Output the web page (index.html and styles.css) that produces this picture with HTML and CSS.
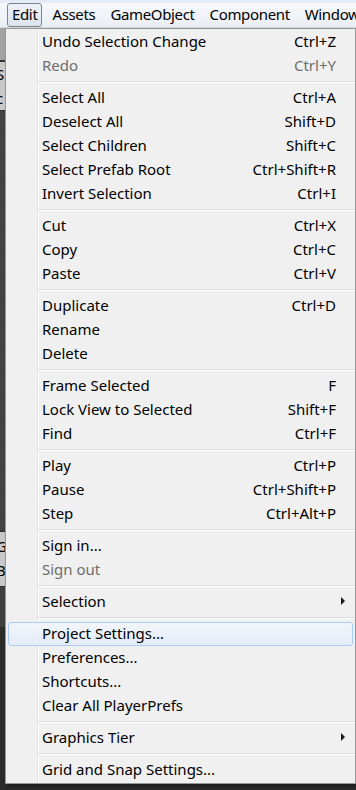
FILE: index.html
```html
<!DOCTYPE html>
<html lang="en-us">
<head>
  <meta charset="UTF-8">
  <title>Edit Menu</title>
  <link rel="stylesheet" href="styles.css">
</head>
<body>
  <div class="menubar">
    <span class="top active">Edit</span>
    <span class="top">Assets</span>
    <span class="top">GameObject</span>
    <span class="top">Component</span>
    <span class="top">Window</span>
  </div>

  <!-- editor panels peeking out behind the popup -->
  <div class="backdrop">
    <div class="strip toolbar"></div>
    <div class="strip panel"><span>S</span><span>c</span></div>
    <div class="strip dark tall"></div>
    <div class="strip panel low"><span>G</span><span>B.</span></div>
    <div class="strip dark"></div>
  </div>

  <div class="popup">
    <div class="item"><span class="label">Undo Selection Change</span><span class="key">Ctrl+Z</span></div>
    <div class="item disabled"><span class="label">Redo</span><span class="key">Ctrl+Y</span></div>
    <div class="sep"></div>
    <div class="item"><span class="label">Select All</span><span class="key">Ctrl+A</span></div>
    <div class="item"><span class="label">Deselect All</span><span class="key">Shift+D</span></div>
    <div class="item"><span class="label">Select Children</span><span class="key">Shift+C</span></div>
    <div class="item"><span class="label">Select Prefab Root</span><span class="key">Ctrl+Shift+R</span></div>
    <div class="item"><span class="label">Invert Selection</span><span class="key">Ctrl+I</span></div>
    <div class="sep"></div>
    <div class="item"><span class="label">Cut</span><span class="key">Ctrl+X</span></div>
    <div class="item"><span class="label">Copy</span><span class="key">Ctrl+C</span></div>
    <div class="item"><span class="label">Paste</span><span class="key">Ctrl+V</span></div>
    <div class="sep"></div>
    <div class="item"><span class="label">Duplicate</span><span class="key">Ctrl+D</span></div>
    <div class="item"><span class="label">Rename</span></div>
    <div class="item"><span class="label">Delete</span></div>
    <div class="sep"></div>
    <div class="item"><span class="label">Frame Selected</span><span class="key">F</span></div>
    <div class="item"><span class="label">Lock View to Selected</span><span class="key">Shift+F</span></div>
    <div class="item"><span class="label">Find</span><span class="key">Ctrl+F</span></div>
    <div class="sep"></div>
    <div class="item"><span class="label">Play</span><span class="key">Ctrl+P</span></div>
    <div class="item"><span class="label">Pause</span><span class="key">Ctrl+Shift+P</span></div>
    <div class="item"><span class="label">Step</span><span class="key">Ctrl+Alt+P</span></div>
    <div class="sep"></div>
    <div class="item"><span class="label">Sign in...</span></div>
    <div class="item disabled"><span class="label">Sign out</span></div>
    <div class="sep"></div>
    <div class="item"><span class="label">Selection</span><span class="arrow"></span></div>
    <div class="sep"></div>
    <div class="item hover"><span class="label">Project Settings...</span></div>
    <div class="item"><span class="label">Preferences...</span></div>
    <div class="item"><span class="label">Shortcuts...</span></div>
    <div class="item"><span class="label">Clear All PlayerPrefs</span></div>
    <div class="sep"></div>
    <div class="item"><span class="label">Graphics Tier</span><span class="arrow"></span></div>
    <div class="sep"></div>
    <div class="item"><span class="label">Grid and Snap Settings...</span></div>
  </div>
</body>
</html>
```

FILE: styles.css
```css
body {
  margin: 0;
  width: 356px;
  height: 790px;
  overflow: hidden;
  position: relative;
  background: #2b2b2b;
  font-family: "Noto Sans", "Open Sans", sans-serif;
  font-size: 15px;
  color: #000;
}
.menubar {
  display: flex;
  align-items: center;
  height: 28px;
  box-sizing: border-box;
  padding: 3px 0 0 7px;
  background: linear-gradient(#e3ecf7 0, #e3ecf7 3px, #f6f8fb 3px, #eaeef4 100%);
  border-bottom: 1px solid #d5dbe3;
  overflow: hidden;
}
.top {
  padding: 0 4px 0 4px;
  height: 22px;
  line-height: 20px;
  margin-right: 5px;
  border: 1px solid transparent;
  border-radius: 3px;
  white-space: nowrap;
  letter-spacing: -0.35px;
}
.top.active {
  border-color: #7f848c;
  background: linear-gradient(#eef3f9, #dbe3ee);
}
.backdrop {
  width: 5px;
  display: flex;
  flex-direction: column;
}
.strip {
  background: #3e3e3e;
  height: 40px;
  border-bottom: 1px solid #2d2d2d;
}
.strip.toolbar {
  height: 32px;
  background: #a3a3a3;
  border-bottom: 2px solid #333;
}
.strip.panel {
  height: 48px;
  background: #c8c8c8;
  display: flex;
  flex-direction: column;
  line-height: 24px;
  text-indent: -4px;
  overflow: hidden;
}
.strip.tall {
  height: 420px;
  background: repeating-linear-gradient(#434343 0, #434343 23px, #393939 23px, #393939 24px);
}
.strip.low {
  height: 52px;
  padding-top: 2px;
}
.popup {
  position: absolute;
  left: 5px;
  top: 28px;
  width: 347px;
  padding: 1px;
  border: 1px solid #979797;
  background-color: #f0f0f0;
  background-image: linear-gradient(to right, transparent 31px, #e2e2e2 31px, #e2e2e2 32px, #ffffff 32px, #ffffff 33px, transparent 33px);
  box-shadow: 2px 2px 3px rgba(0, 0, 0, 0.3);
}
.item {
  display: flex;
  align-items: center;
  height: 24px;
  box-sizing: border-box;
  padding: 0 18px 2px 35px;
  white-space: nowrap;
  line-height: 22px;
}
.item .label {
  flex: 1;
}
.item.disabled {
  color: #6d6d6d;
}
.item.hover {
  margin: 0 1px;
  padding-left: 33px;
  padding-right: 16px;
  border: 1px solid #a9cdf3;
  border-radius: 3px;
  background: linear-gradient(#f2f5fa, #e4ecf8);
}
.arrow {
  width: 0;
  height: 0;
  margin-right: -9px;
  border-top: 4px solid transparent;
  border-bottom: 4px solid transparent;
  border-left: 4px solid #1a1a1a;
}
.sep {
  height: 8px;
  box-sizing: border-box;
  margin-left: 31px;
  padding-top: 3px;
}
.sep::before {
  content: "";
  display: block;
  border-top: 1px solid #d9d9d9;
  border-bottom: 1px solid #ffffff;
}
```
